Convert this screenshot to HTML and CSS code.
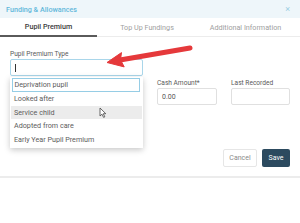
FILE: index.html
```html
<!DOCTYPE html>
<html>
<head>
<meta charset="utf-8">
<link rel="stylesheet" href="styles.css">
</head>
<body>
<div class="modal">
  <div class="header">
    <span class="title">Funding &amp; Allowances</span>
    <span class="close">×</span>
  </div>
  <div class="tabs">
    <div class="tab active">Pupil Premium</div>
    <div class="tab">Top Up Fundings</div>
    <div class="tab">Additional Information</div>
  </div>
  <div class="form">
    <div class="field type-field">
      <label class="label">Pupil Premium Type</label>
      <div class="input focused"><span class="caret"></span></div>
      <div class="dropdown">
        <div class="option highlighted">Deprivation pupil</div>
        <div class="option">Looked after</div>
        <div class="option hover">Service child
          <svg class="pointer" width="8" height="11" viewBox="0 0 8 11"><path d="M1 1 L1 9 L3 7.2 L4.6 10.4 L5.8 9.8 L4.3 6.7 L6.8 6.7 Z" fill="#fff" stroke="#444" stroke-width="0.8" stroke-linejoin="round"/></svg>
        </div>
        <div class="option">Adopted from care</div>
        <div class="option">Early Year Pupil Premium</div>
      </div>
    </div>
    <div class="row">
      <div class="field"></div>
      <div class="field">
        <label class="label">Cash Amount*</label>
        <div class="input small">0.00</div>
      </div>
      <div class="field">
        <label class="label">Last Recorded</label>
        <div class="input small"></div>
      </div>
    </div>
  </div>
  <div class="actions">
    <button class="btn cancel">Cancel</button>
    <button class="btn save">Save</button>
  </div>
  <div class="footer"></div>
</div>
<svg class="annotation" width="300" height="223" viewBox="0 0 300 223">
  <line x1="190" y1="48" x2="120" y2="60" stroke="#e5393b" stroke-width="5" stroke-linecap="round"/>
  <path d="M107 62.5 L121.5 52.6 L120.5 59.8 L124.2 66.9 Z" fill="#e5393b" stroke="#e5393b" stroke-width="1" stroke-linejoin="round"/>
</svg>
</body>
</html>
```
FILE: styles.css
```css
html, body {
  margin: 0;
  padding: 0;
  background: #fff;
  width: 300px;
  height: 223px;
  overflow: hidden;
  font-family: Roboto, "Liberation Sans", sans-serif;
}
.modal {
  width: 300px;
  position: relative;
}
.header {
  height: 18px;
  background: #eef6fa;
  display: flex;
  align-items: center;
  justify-content: space-between;
  padding: 0 10px 0 6px;
}
.title {
  color: #62b8da;
  font-size: 7.2px;
  font-weight: 500;
}
.close {
  color: #9ccfe3;
  font-size: 9px;
}
.tabs {
  display: grid;
  grid-template-columns: 97px 100px 97px;
  height: 19px;
  border-bottom: 1px solid #ececec;
  box-sizing: border-box;
}
.tab {
  display: flex;
  align-items: center;
  justify-content: center;
  font-size: 7.2px;
  color: #a0a0a0;
}
.tab.active {
  color: #3a3a3a;
  font-weight: 500;
  border-bottom: 2px solid #5a5a5a;
  margin-bottom: -1px;
}
.form {
  padding: 13px 9px 0 10px;
}
.field {
  position: relative;
  display: flex;
  flex-direction: column;
}
.type-field {
  width: 133px;
}
.label {
  font-size: 6.6px;
  color: #5a5a5a;
  height: 9px;
  line-height: 9px;
}
.input {
  height: 17px;
  box-sizing: border-box;
  border: 1px solid #e0e0e0;
  border-radius: 2px;
  font-size: 7px;
  color: #555;
  display: flex;
  align-items: center;
  padding-left: 4px;
  background: #fff;
}
.input.focused {
  border-color: #a9d6ea;
}
.caret {
  width: 1px;
  height: 8px;
  background: #333;
}
.row {
  display: grid;
  grid-template-columns: 133px 60px 59px;
  column-gap: 14px;
  margin-top: 3px;
}
.dropdown {
  position: absolute;
  top: 27px;
  left: 0;
  width: 133px;
  box-sizing: border-box;
  background: #fff;
  padding: 1px 1px;
  box-shadow: 0 2px 6px rgba(0, 0, 0, 0.22);
  z-index: 2;
}
.option {
  height: 13.75px;
  line-height: 13.75px;
  font-size: 7.2px;
  color: #5c5c5c;
  padding-left: 3px;
  position: relative;
  box-sizing: border-box;
}
.option.highlighted {
  border: 1px solid #96cde5;
  line-height: 11.75px;
  padding-left: 1.5px;
  margin: 0 2px 0 1px;
}
.option.hover {
  background: #ececec;
}
.pointer {
  position: absolute;
  left: 88px;
  top: 1.5px;
}
.actions {
  display: flex;
  justify-content: flex-end;
  gap: 5px;
  padding: 0 10px 0 0;
  margin-top: 44px;
}
.btn {
  height: 18px;
  box-sizing: border-box;
  font-family: Roboto, "Liberation Sans", sans-serif;
  font-size: 7px;
  border-radius: 2px;
  padding: 0;
  cursor: pointer;
}
.cancel {
  width: 34px;
  background: #fff;
  color: #8a8a8a;
  border: 1px solid #e6e6e6;
}
.save {
  width: 28px;
  background: #2c4a5f;
  color: #fff;
  border: none;
}
.footer {
  margin-top: 9px;
  height: 2px;
  background: #ececec;
}
.annotation {
  position: absolute;
  left: 0;
  top: 0;
  pointer-events: none;
}
```
